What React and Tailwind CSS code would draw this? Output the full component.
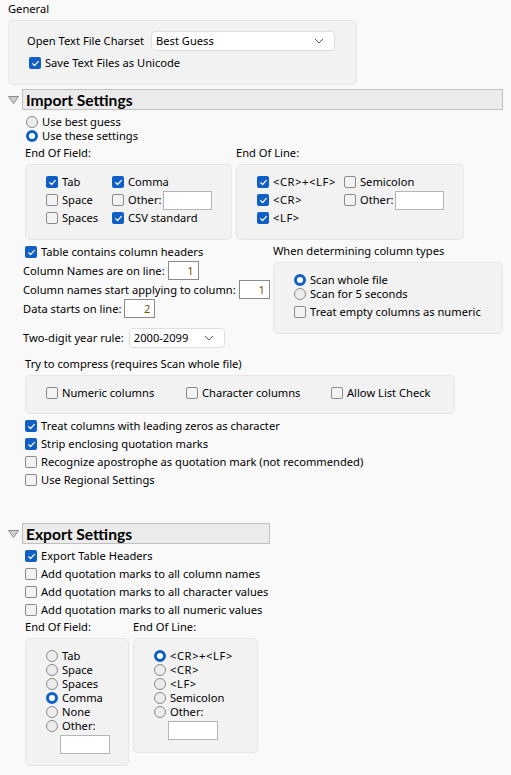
import React from "react";

function Box({ checked }) {
  return checked ? (
    <span className="w-[12px] h-[12px] rounded-[2px] bg-[#0f5fc6] flex items-center justify-center shrink-0">
      <svg width="9" height="9" viewBox="0 0 9 9">
        <path d="M1.6 4.6 L3.6 6.5 L7.4 2.4" stroke="white" strokeWidth="1.2" fill="none" strokeLinecap="round" strokeLinejoin="round" />
      </svg>
    </span>
  ) : (
    <span className="w-[12px] h-[12px] rounded-[2px] border border-[#8a8a8a] bg-[#f3f3f3] shrink-0" />
  );
}

function Dot({ checked }) {
  return checked ? (
    <span className="w-[12px] h-[12px] rounded-full border-[3px] border-[#0f5fc6] bg-white shrink-0" />
  ) : (
    <span className="w-[12px] h-[12px] rounded-full border border-[#8a8a8a] bg-[#ececec] shrink-0" />
  );
}

function Check({ checked, children, className = "" }) {
  return (
    <div className={"flex items-center gap-[4px] " + className}>
      <Box checked={checked} />
      <span className="whitespace-nowrap">{children}</span>
    </div>
  );
}

function Radio({ checked, children, className = "" }) {
  return (
    <div className={"flex items-center gap-[4px] h-[14px] " + className}>
      <Dot checked={checked} />
      <span className="whitespace-nowrap">{children}</span>
    </div>
  );
}

function Chevron() {
  return (
    <svg width="10" height="6" viewBox="0 0 10 6">
      <path d="M1 1 L5 5 L9 1" stroke="#555" strokeWidth="1" fill="none" />
    </svg>
  );
}

function Tri() {
  return (
    <svg width="11" height="8" viewBox="0 0 11 8" className="shrink-0">
      <polygon points="0.5,0.5 10.5,0.5 5.5,7.5" fill="#cfcfcf" stroke="#8e8e8e" strokeWidth="1" />
    </svg>
  );
}

function NumBox({ v, w = "w-[31px]" }) {
  return (
    <span className={"h-[19px] bg-white border border-[#8a8a8a] flex items-center justify-end pr-[4px] text-[#7a5200] shrink-0 " + w}>
      {v}
    </span>
  );
}

function Blank({ className = "" }) {
  return <span className={"h-[19px] w-[49px] bg-white border border-[#b5b5b5] shrink-0 " + className} />;
}

function T({ children }) {
  return <span className="tracking-[0.6px]">{children}</span>;
}

export default function App() {
  return (
    <div className="w-[511px] h-[775px] bg-[#f9f9f9] overflow-hidden text-[11.15px] leading-[14px] text-black font-['Noto_Sans',sans-serif]">
      <div className="pl-[8px] pt-[2px] h-[16px]">General</div>

      <div className="ml-[8px] mt-[4px] w-[349px] h-[65px] rounded-[5px] bg-[#f2f2f2] border border-[#e6e6e6] pt-[10px] pl-[18px]">
        <div className="flex items-center">
          <span className="whitespace-nowrap">Open Text File Charset</span>
          <div className="ml-[7px] w-[184px] h-[20px] bg-white border border-[#dedede] rounded-[4px] flex items-center justify-between pl-[4px] pr-[10px]">
            <span>Best Guess</span>
            <Chevron />
          </div>
        </div>
        <Check checked className="mt-[5px] ml-[2px] h-[14px]">Save Text Files as Unicode</Check>
      </div>

      <div className="flex items-center mt-[4px] pl-[8px]">
        <Tri />
        <div className="ml-[3px] w-[481px] h-[21px] bg-[#ebebeb] border border-[#c0c0c0] pl-[3px] font-bold text-[15.6px] font-['Lato',sans-serif] flex items-center">
          Import Settings
        </div>
      </div>

      <div className="pl-[26px] mt-[5px]">
        <Radio>Use best guess</Radio>
        <Radio checked>Use these settings</Radio>
      </div>

      <div className="flex pl-[25px] mt-[3px] gap-[4px]">
        <div className="w-[207px]">
          <div className="h-[14px]">End Of Field:</div>
          <div className="mt-[4px] h-[76px] rounded-[5px] bg-[#f2f2f2] border border-[#e6e6e6] pt-[8px] pl-[20px]">
            <div className="flex h-[18px] items-center">
              <Check checked className="w-[66px]">Tab</Check>
              <Check checked>Comma</Check>
            </div>
            <div className="flex h-[18px] items-center">
              <Check className="w-[66px]">Space</Check>
              <Check>Other:</Check>
              <Blank className="ml-[2px]" />
            </div>
            <div className="flex h-[18px] items-center">
              <Check className="w-[66px]">Spaces</Check>
              <Check checked>CSV standard</Check>
            </div>
          </div>
        </div>
        <div className="w-[228px]">
          <div className="h-[14px]">End Of Line:</div>
          <div className="mt-[4px] h-[76px] rounded-[5px] bg-[#f2f2f2] border border-[#e6e6e6] pt-[8px] pl-[20px]">
            <div className="flex h-[18px] items-center">
              <Check checked className="w-[87px]"><T>&lt;CR&gt;+&lt;LF&gt;</T></Check>
              <Check>Semicolon</Check>
            </div>
            <div className="flex h-[18px] items-center">
              <Check checked className="w-[87px]"><T>&lt;CR&gt;</T></Check>
              <Check>Other:</Check>
              <Blank className="ml-[2px]" />
            </div>
            <div className="flex h-[18px] items-center">
              <Check checked className="w-[87px]"><T>&lt;LF&gt;</T></Check>
            </div>
          </div>
        </div>
      </div>

      <div className="flex pl-[23px]">
        <div className="w-[250px]">
          <Check checked className="mt-[5px] ml-[2px] h-[14px]">Table contains column headers</Check>
          <div className="mt-[2px]">
            <div className="flex items-center h-[19px] gap-[3px]">
              <span className="whitespace-nowrap">Column Names are on line:</span>
              <NumBox v="1" />
            </div>
            <div className="flex items-center h-[19px] gap-[3px]">
              <span className="whitespace-nowrap">Column names start applying to column:</span>
              <NumBox v="1" />
            </div>
            <div className="flex items-center h-[19px] gap-[3px]">
              <span className="whitespace-nowrap">Data starts on line:</span>
              <NumBox v="2" />
            </div>
          </div>
          <div className="flex items-center mt-[10px] h-[20px]">
            <span className="whitespace-nowrap">Two-digit year rule:</span>
            <div className="ml-[5px] w-[96px] h-[20px] bg-white border border-[#dedede] rounded-[4px] flex items-center justify-between pl-[4px] pr-[10px]">
              <span>2000-2099</span>
              <Chevron />
            </div>
          </div>
        </div>
        <div className="w-[230px]">
          <div className="mt-[4px] h-[14px] whitespace-nowrap">When determining column types</div>
          <div className="mt-[4px] h-[72px] rounded-[5px] bg-[#f2f2f2] border border-[#e6e6e6] pt-[10px] pl-[20px]">
            <Radio checked>Scan whole file</Radio>
            <Radio>Scan for 5 seconds</Radio>
            <Check className="mt-[4px] h-[14px]">Treat empty columns as numeric</Check>
          </div>
        </div>
      </div>

      <div className="pl-[25px]">
        <div className="mt-[9px] h-[14px]">Try to compress (requires Scan whole file)</div>
        <div className="mt-[4px] w-[430px] h-[39px] rounded-[5px] bg-[#f2f2f2] border border-[#e6e6e6] pt-[10px] pl-[20px] flex">
          <Check className="w-[140px] h-[14px]">Numeric columns</Check>
          <Check className="w-[145px] h-[14px]">Character columns</Check>
          <Check className="h-[14px]">Allow List Check</Check>
        </div>
        <div className="mt-[3px]">
          <Check checked className="h-[18px]">Treat columns with leading zeros as character</Check>
          <Check checked className="h-[18px]">Strip enclosing quotation marks</Check>
          <Check className="h-[18px]">Recognize apostrophe as quotation mark (not recommended)</Check>
          <Check className="h-[18px]">Use Regional Settings</Check>
        </div>
      </div>

      <div className="flex items-center mt-[34px] pl-[8px]">
        <Tri />
        <div className="ml-[3px] w-[248px] h-[21px] bg-[#ebebeb] border border-[#c0c0c0] pl-[3px] font-bold text-[15.6px] font-['Lato',sans-serif] flex items-center">
          Export Settings
        </div>
      </div>

      <div className="pl-[25px] mt-[3px]">
        <Check checked className="h-[18px]">Export Table Headers</Check>
        <Check className="h-[18px]">Add quotation marks to all column names</Check>
        <Check className="h-[18px]">Add quotation marks to all character values</Check>
        <Check className="h-[18px]">Add quotation marks to all numeric values</Check>
      </div>

      <div className="flex pl-[25px] mt-[1px] gap-[4px] items-start">
        <div className="w-[104px]">
          <div className="h-[14px]">End Of Field:</div>
          <div className="mt-[4px] h-[128px] rounded-[5px] bg-[#f2f2f2] border border-[#e6e6e6] pt-[10px] pl-[20px]">
            <Radio>Tab</Radio>
            <Radio>Space</Radio>
            <Radio>Spaces</Radio>
            <Radio checked>Comma</Radio>
            <Radio>None</Radio>
            <Radio>Other:</Radio>
            <Blank className="mt-[2px] ml-[14px] block w-[50px] h-[18px]" />
          </div>
        </div>
        <div className="w-[125px]">
          <div className="h-[14px]">End Of Line:</div>
          <div className="mt-[4px] h-[115px] rounded-[5px] bg-[#f2f2f2] border border-[#e6e6e6] pt-[10px] pl-[20px]">
            <Radio checked><T>&lt;CR&gt;+&lt;LF&gt;</T></Radio>
            <Radio><T>&lt;CR&gt;</T></Radio>
            <Radio><T>&lt;LF&gt;</T></Radio>
            <Radio>Semicolon</Radio>
            <Radio>Other:</Radio>
            <Blank className="mt-[2px] ml-[14px] block w-[50px] h-[19px]" />
          </div>
        </div>
      </div>
    </div>
  );
}
